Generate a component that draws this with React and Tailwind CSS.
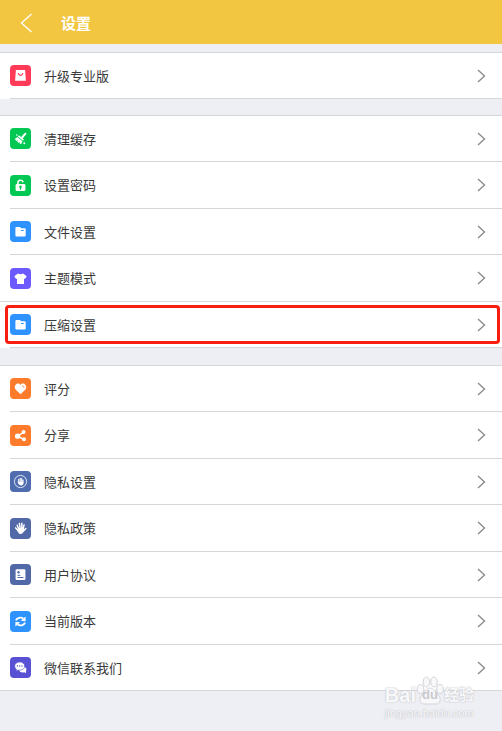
import clsx from 'clsx';

const ICONS = {
    bag: (
        <>
            <path fill="#fff" d="M5.900 5h9.200l.8 10.800H5.100z" />
            <path d="M8.300 8.600q2.200 3.600 4.400 0" fill="none" stroke="#ff3b58" strokeWidth="1.200" strokeLinecap="round" />
        </>
    ),
    broom: (
        <>
            <path d="M15.400 5.700l-3.300 3.800" stroke="#fff" strokeWidth="2" strokeLinecap="round" />
            <path fill="#fff" d="M9 7.200l4.900 4.100-.9 1.400-5.200-4.200z" />
            <path fill="#fff" d="M7.400 9.100l5 4.200-1.200 3-1.500-.7.200-1.400-1.400.6-1.300-1.100.7-1.300-1.700.3-1.500-1.700z" />
            <circle cx="6.800" cy="7" r=".8" fill="#fff" />
            <circle cx="14.300" cy="15.300" r="1" fill="#fff" />
        </>
    ),
    lock: (
        <>
            <path d="M7.900 9.500V7.900a2.700 2.700 0 0 1 5.300-.7" fill="none" stroke="#fff" strokeWidth="1.600" />
            <rect x="5.600" y="9" width="9.800" height="7" rx="1.300" fill="#fff" />
            <circle cx="10.500" cy="11.700" r="1.200" fill="#00c853" />
            <path d="M10.500 11.700v2.500" stroke="#00c853" strokeWidth="1.300" strokeLinecap="round" />
        </>
    ),
    folder: (
        <>
            <path fill="#fff" d="M6.400 6h3.500l1.300 1.300h3.500q1 0 1 1v6.300q0 1-1 1H6.400q-1 0-1-1V7q0-1 1-1z" />
            <path d="M11 9.500h2.700" stroke="#2e93ff" strokeWidth="1" />
        </>
    ),
    shirt: (
        <path fill="#fff" d="M8 5.400q2.500 1.500 5 0l3.700 2.900-1.800 2.800-.9-.5v5.400H7v-5.400l-.9.500-1.800-2.800z" />
    ),
    heart: (
        <>
            <path fill="#fff" d="M10.500 16.200L5.800 11.800C4.200 10.100 4.400 7.100 6.500 6c1.500-.8 3.100-.3 4 .9.900-1.200 2.500-1.700 4-.9 2.100 1.100 2.300 4.100.7 5.800z" />
            <path d="M12.600 7.800q1.400.1 1.500 1.600" fill="none" stroke="#ff7b2c" strokeWidth=".9" strokeLinecap="round" />
        </>
    ),
    share: (
        <>
            <path d="M13.700 7.200L7.600 11.200l6.100 3.100" fill="none" stroke="#fff" strokeWidth="1.500" />
            <circle cx="7.600" cy="11.200" r="2.600" fill="#fff" />
            <circle cx="13.600" cy="7" r="2" fill="#fff" />
            <circle cx="14" cy="14.300" r="2" fill="#fff" />
        </>
    ),
    handCircle: (
        <>
            <circle cx="10.500" cy="10.500" r="6.100" fill="none" stroke="#dfe5f5" strokeWidth="1" />
            <path d="M8.700 8.300v3M10.200 7.200v4M11.700 7.500v4M13 9v2.500" stroke="#fff" strokeWidth="1.100" strokeLinecap="round" />
            <path fill="#fff" d="M7.500 10.500l1.200.4h4.800v1.300q-.2 2.200-2.300 2.200-2 0-3-2z" />
        </>
    ),
    hand: (
        <>
            <path d="M7.200 7.200l1.900 4.500M9.400 5.500l.8 5M11.900 5.300l-.1 5M14.100 6.900l-1.100 4.100M15.800 10.500l-2.800 3M5.700 9.900l2.800 3" stroke="#fff" strokeWidth="1.500" strokeLinecap="round" />
            <path fill="#fff" d="M8 10.200l5.700-.2.200 2.500-1.400 2.800q-1.600 1.300-3.500.2l-2-3z" />
        </>
    ),
    document: (
        <>
            <rect x="5.600" y="5.300" width="9.800" height="10.600" rx="1" fill="#fff" />
            <circle cx="8.500" cy="8.300" r="1.200" fill="#5269a8" />
            <path d="M7.500 11.300h2.800M7.500 13.500h6" stroke="#5269a8" strokeWidth="1" />
        </>
    ),
    refresh: (
        <>
            <path d="M5.900 9.400c1.200-2.800 4.800-3.500 7.400-1.900M15.100 11.700c-1.200 2.800-4.800 3.500-7.400 1.900" fill="none" stroke="#fff" strokeWidth="1.800" />
            <path fill="#fff" d="M15.600 5.600v4.600l-4.700-.4zM5.400 15.500v-4.600l4.700.4z" />
        </>
    ),
    chat: (
        <>
            <ellipse cx="12.800" cy="12.600" rx="3.600" ry="2.900" fill="#fff" />
            <path fill="#fff" d="M13.500 14.500l2.500 1.800-.2-3z" />
            <path fill="#fff" stroke="#5851d3" strokeWidth=".6" d="M9.700 5c2.900 0 5 1.800 5 4.100s-2.100 4.100-5 4.100q-.9 0-1.600-.2l-2.200 1.100.5-2C5.300 11.400 4.700 10.300 4.700 9.100 4.700 6.800 6.800 5 9.700 5z" />
            <circle cx="7.400" cy="9" r=".7" fill="#5851d3" />
            <circle cx="9.700" cy="9" r=".7" fill="#5851d3" />
            <circle cx="12" cy="9" r=".7" fill="#5851d3" />
        </>
    ),
};

const GROUPS = [
    {
        className: 'mt-2',
        items: [{ label: '升级专业版', icon: 'bag', color: 'bg-[#ff3b58]' }],
    },
    {
        className: 'mt-4',
        items: [
            { label: '清理缓存', icon: 'broom', color: 'bg-[#00c853]' },
            { label: '设置密码', icon: 'lock', color: 'bg-[#00c853]' },
            { label: '文件设置', icon: 'folder', color: 'bg-[#2e93ff]' },
            { label: '主题模式', icon: 'shirt', color: 'bg-[#6c5aff]', fullLine: true },
            { label: '压缩设置', icon: 'folder', color: 'bg-[#2e93ff]', highlighted: true },
        ],
    },
    {
        className: 'mt-[17px]',
        items: [
            { label: '评分', icon: 'heart', color: 'bg-[#ff7b2c]' },
            { label: '分享', icon: 'share', color: 'bg-[#ff7b2c]' },
            { label: '隐私设置', icon: 'handCircle', color: 'bg-[#4f6caf]' },
            { label: '隐私政策', icon: 'hand', color: 'bg-[#5269a8]' },
            { label: '用户协议', icon: 'document', color: 'bg-[#5269a8]' },
            { label: '当前版本', icon: 'refresh', color: 'bg-[#2e93ff]' },
            { label: '微信联系我们', icon: 'chat', color: 'bg-[#5851d3]', fullLine: true },
        ],
    },
];

function SettingsRow({ item }) {
    return (
        <li className="relative flex h-[46px] flex-col even:h-[47px]">
            <button type="button" className="flex flex-1 items-center pr-4 pl-2.5 text-left">
                <span className={clsx('size-[21px] shrink-0 rounded-sm', item.color)}>
                    <svg viewBox="0 0 21 21" className="size-full" aria-hidden="true">
                        {ICONS[item.icon]}
                    </svg>
                </span>
                <span className="ml-[13px] flex-1 text-[13px] leading-5">{item.label}</span>
                <svg viewBox="0 0 9 14" className="h-[14px] w-[9px]" fill="none" stroke="#8c8c8c" strokeWidth="1.4" aria-hidden="true">
                    <path d="M1 1l6.500 6L1 13" />
                </svg>
            </button>
            <div className={clsx('h-px bg-[#d5d6d8]', !item.fullLine && 'ml-2.5')} />
            {item.highlighted && (
                <span className="pointer-events-none absolute top-[3px] right-0.5 bottom-1 left-[5px] rounded-sm border-3 border-[#f91d10]" />
            )}
        </li>
    );
}

// Site watermark in the bottom right corner
function Watermark() {
    return (
        <div className="pointer-events-none absolute right-7 bottom-3 font-['Liberation_Sans','Noto_Sans_CJK_SC',sans-serif] text-[#f8f8fa] [text-shadow:0_0_1px_#c8c9ce,0_0_1px_#c8c9ce,0_0_2px_#d4d5d9]">
            <div className="flex h-7 items-end">
                <span className="text-[20px] leading-6 font-bold">Bai</span>
                <span className="relative h-8 w-7">
                    <svg viewBox="0 0 28 32" className="size-full" fill="#f8f8fa" stroke="#d4d5d9" strokeWidth="1" aria-hidden="true">
                        <ellipse cx="4.500" cy="14" rx="3.300" ry="4.500" />
                        <ellipse cx="10.500" cy="7" rx="3.300" ry="5" />
                        <ellipse cx="18" cy="7" rx="3.300" ry="5" />
                        <ellipse cx="24" cy="14" rx="3.300" ry="4.500" />
                        <path d="M14 13c4 0 5 4 8 7 4 4 2 9-2 9H8c-4 0-6-5-2-9 3-3 4-7 8-7z" />
                    </svg>
                    <span className="absolute inset-x-0 bottom-1 text-center text-[13px] leading-4 font-bold text-[#c8c9ce] [text-shadow:none]">du</span>
                </span>
                <span className="text-[15px] leading-6 font-bold">经验</span>
            </div>
            <div className="text-[11px] leading-3">jingyan.baidu.com</div>
        </div>
    );
}

export default function App() {
    return (
        <div className="relative min-h-screen bg-[#eeeff4] font-['Noto_Sans_CJK_SC',sans-serif] text-[#3a3a3a]">
            <header className="flex h-11 items-center bg-[#f3c642] pt-0.5 pl-5 text-white">
                <button type="button" aria-label="返回">
                    <svg viewBox="0 0 12 20" className="h-5 w-3" fill="none" stroke="currentColor" strokeWidth="1.3">
                        <path d="M11.500 1L1.500 10l10 9" />
                    </svg>
                </button>
                <h1 className="ml-[29px] text-[15px] leading-6 font-bold">设置</h1>
            </header>
            <main>
                {GROUPS.map((group) => (
                    <ul key={group.items[0].label} className={clsx('border-t border-[#d5d6d8] bg-white', group.className)}>
                        {group.items.map((item) => (
                            <SettingsRow key={item.label} item={item} />
                        ))}
                    </ul>
                ))}
            </main>
            <Watermark />
        </div>
    );
}
